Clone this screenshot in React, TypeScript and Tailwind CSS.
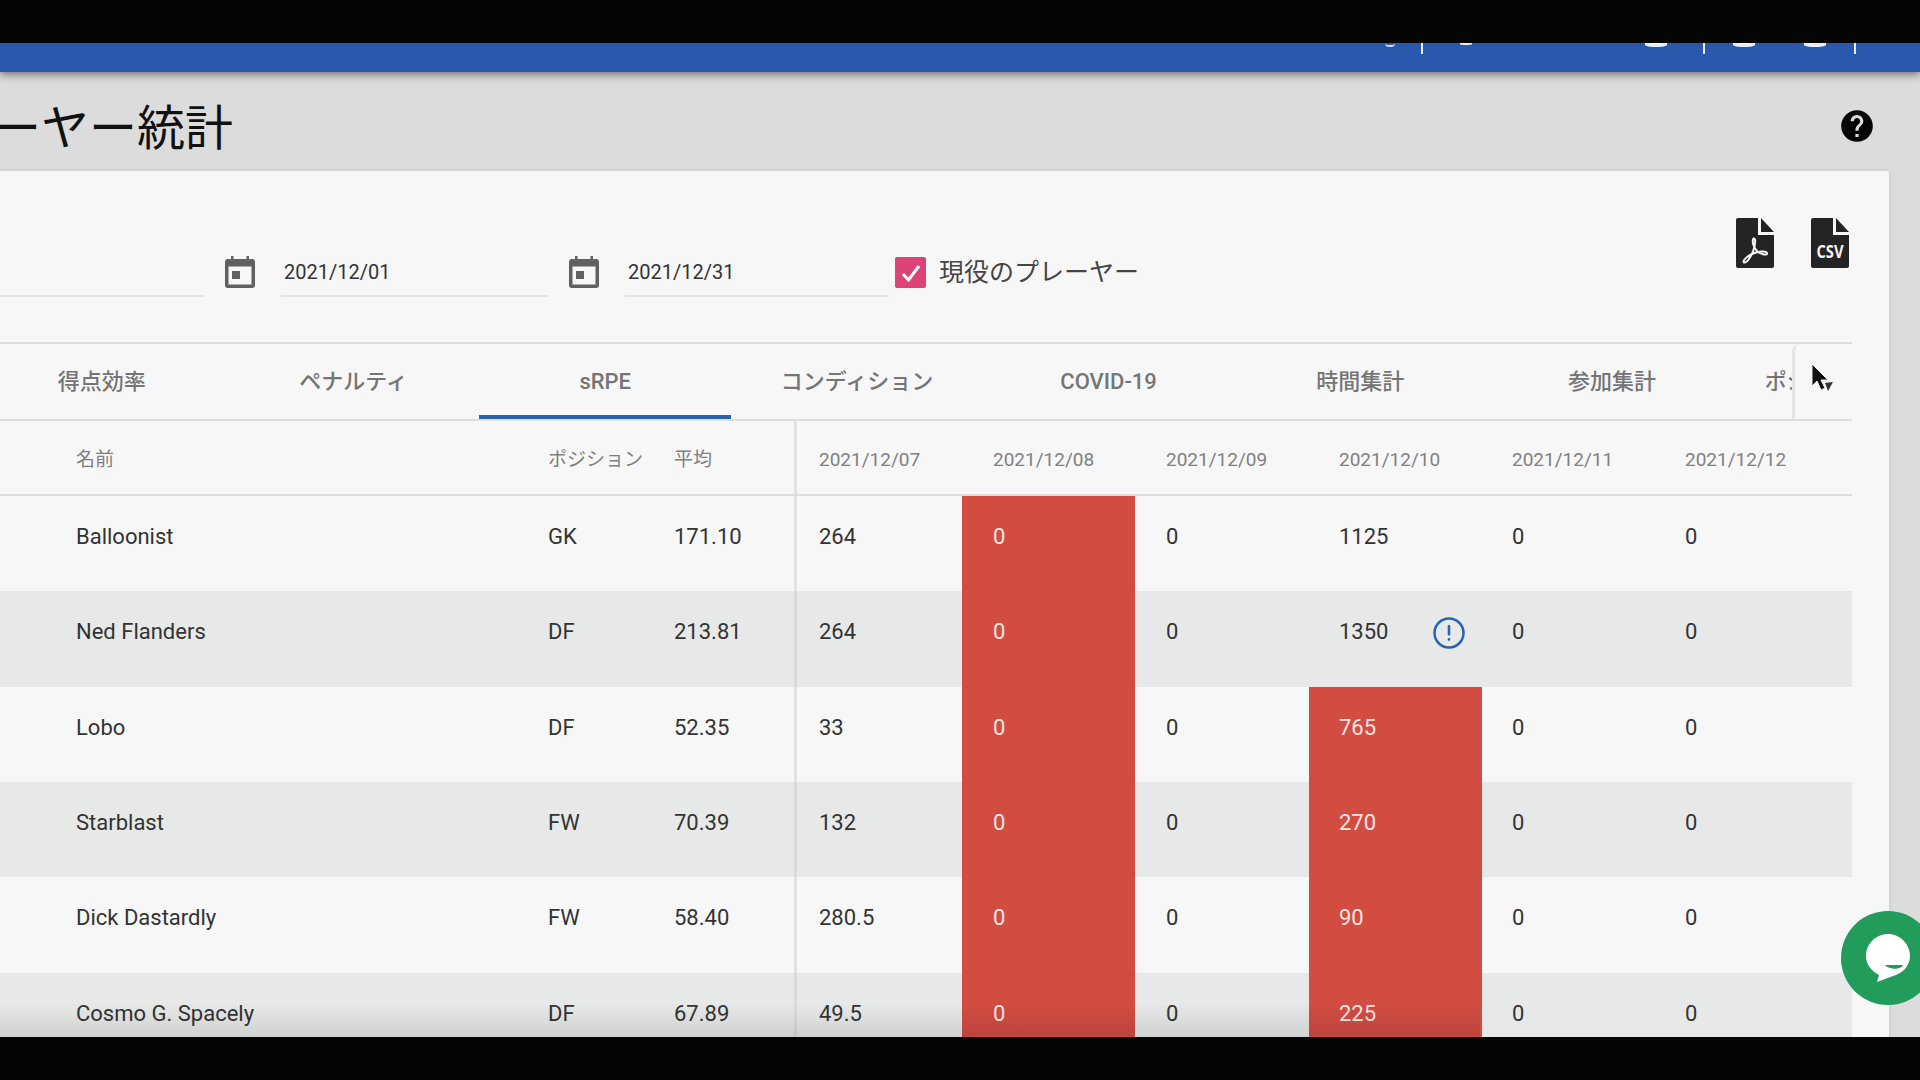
const tabs = ["得点効率", "ペナルティ", "sRPE", "コンディション", "COVID-19", "時間集計", "参加集計"]

const dates = ["2021/12/07", "2021/12/08", "2021/12/09", "2021/12/10", "2021/12/11", "2021/12/12"]

const dateCellPads = ["pl-[22px]", "pl-[31px]", "pl-[31px]", "pl-[30px]", "pl-[30px]", "pl-[30px]"]

const players = [
  { name: "Balloonist", pos: "GK", avg: "171.10", values: ["264", "0", "0", "1125", "0", "0"] },
  { name: "Ned Flanders", pos: "DF", avg: "213.81", values: ["264", "0", "0", "1350", "0", "0"], flag: true },
  { name: "Lobo", pos: "DF", avg: "52.35", values: ["33", "0", "0", "765", "0", "0"], hot: true },
  { name: "Starblast", pos: "FW", avg: "70.39", values: ["132", "0", "0", "270", "0", "0"], hot: true },
  { name: "Dick Dastardly", pos: "FW", avg: "58.40", values: ["280.5", "0", "0", "90", "0", "0"], hot: true },
  { name: "Cosmo G. Spacely", pos: "DF", avg: "67.89", values: ["49.5", "0", "0", "225", "0", "0"], hot: true },
]

const gridCols = "grid grid-cols-[548px_126px_123px_165px_173px_174px_173px_173px_197px]"

function CalendarIcon() {
  return (
    <svg width="30" height="32" viewBox="0 0 30 32" className="shrink-0">
      <path
        fillRule="evenodd"
        fill="#616161"
        d="M6 0h2.5v3h13V0H24v3h3a3 3 0 0 1 3 3v23a3 3 0 0 1-3 3H3a3 3 0 0 1-3-3V6a3 3 0 0 1 3-3h3V0zM3.5 10.5V28.500h23V10.500h-23z"
      />
      <rect x="7" y="15" width="8" height="8" fill="#616161" />
    </svg>
  )
}

function FileBody() {
  return (
    <>
      <path fill="#242424" d="M2 0H22V17H38V48a2 2 0 0 1-2 2H2a2 2 0 0 1-2-2V2a2 2 0 0 1 2-2z" />
      <path fill="#242424" d="M25 0L38 14H25z" />
    </>
  )
}

function PdfIcon() {
  return (
    <svg width="38" height="50" viewBox="0 0 38 50">
      <FileBody />
      <path
        fill="none"
        stroke="#f5f5f5"
        strokeWidth="2"
        d="M17.500 20.500C15.500 24 18 30 21.500 33.500C25.500 37 32 37.500 31 35C30 32.500 21.500 33 15 36.500C9 39.500 6.500 43.500 8 44.500C10.500 45.500 15 39 17.500 32C19.500 26 20 20 17.500 20.500Z"
      />
    </svg>
  )
}

function CsvIcon() {
  return (
    <svg width="38" height="50" viewBox="0 0 38 50">
      <FileBody />
      <text
        x="19"
        y="40"
        textAnchor="middle"
        fontSize="18"
        fontWeight="700"
        fill="#f5f5f5"
        textLength="27"
        lengthAdjust="spacingAndGlyphs"
        fontFamily="'Open Sans', sans-serif"
      >
        CSV
      </text>
    </svg>
  )
}

function HelpIcon() {
  return (
    <svg width="38" height="38" viewBox="0 0 24 24" fill="#050505">
      <path d="M12 2C6.48 2 2 6.48 2 12s4.48 10 10 10 10-4.480 10-10S17.520 2 12 2zm1 17h-2v-2h2v2zm2.070-7.750l-.9.920C13.450 12.900 13 13.500 13 15h-2v-.5c0-1.100.450-2.100 1.170-2.830l1.240-1.260c.370-.360.590-.860.590-1.410 0-1.100-.9-2-2-2s-2 .9-2 2H8c0-2.210 1.790-4 4-4s4 1.790 4 4c0 .880-.360 1.680-.930 2.250z" />
    </svg>
  )
}

function InfoIcon() {
  return (
    <svg width="32" height="32" viewBox="0 0 32 32" className="ml-[45px] mt-[-3px] shrink-0">
      <circle cx="16" cy="16" r="14.500" fill="none" stroke="#2a64b0" strokeWidth="2.500" />
      <rect x="14.700" y="8" width="2.600" height="10.500" rx="1" fill="#2a64b0" />
      <rect x="14.700" y="21" width="2.600" height="2.800" rx="1" fill="#2a64b0" />
    </svg>
  )
}

function Cursor() {
  return (
    <svg width="24" height="34" viewBox="0 0 24 34" className="absolute left-[1811px] top-[19px]">
      <path d="M1 1V23L6 18L10 27L14 25L10 17H17Z" fill="#111" stroke="#eee" strokeWidth="1" />
      <path d="M14 20L22 19L17 28Z" fill="#333" />
    </svg>
  )
}

function ChatButton() {
  return (
    <div className="absolute left-[1841px] top-[868px] w-[94px] h-[94px] rounded-full bg-[#219c5b] flex items-center justify-center">
      <svg width="50" height="52" viewBox="0 0 50 52">
        <path
          fill="#fff"
          d="M25 2C37 2 47 12 47 24C47 35 38 42 30 44L14 50L16 43C8 39 3 32 3 24C3 12 13 2 25 2Z"
        />
        <path fill="#219c5b" d="M22 33H40C38 38 26 38 22 33Z" />
      </svg>
    </div>
  )
}

function DateField({ value, width }: { value: string; width: string }) {
  return (
    <div className="flex items-start">
      <div className="mt-[2px] mr-[26px]">
        <CalendarIcon />
      </div>
      <div className={`${width} h-[43px] border-b-2 border-[#e2e2e2] pl-[3px] text-[20px] leading-[37px] text-[#333]`}>
        {value}
      </div>
    </div>
  )
}

export default function App() {
  return (
    <div className="w-[1920px] h-[1080px] overflow-hidden bg-[#050505] font-['Roboto','Noto_Sans_CJK_JP',sans-serif]">
      <div className="h-[43px]" />

      <div className="relative h-[994px] overflow-hidden bg-[#dcdcdc]">
        {/* top bar, only the bottom of its content is in frame */}
        <div className="relative z-10 h-[29px] bg-[#2a58ac] shadow-[0_2px_9px_rgba(0,0,0,0.55)] flex items-start pl-[1385px]">
          <div className="w-[10px] h-[4px] rounded-b-full border-b-2 border-white/80" />
          <div className="w-[2px] h-[11px] bg-[#e8edf6] ml-[26px]" />
          <div className="w-[12px] h-[2px] rounded-b-[50%] bg-[#e8edf6] ml-[37px]" />
          <div className="w-[22px] h-[4px] rounded-b-[50%] bg-[#e8edf6] ml-[173px]" />
          <div className="w-[2px] h-[11px] bg-[#e8edf6] ml-[36px]" />
          <div className="w-[22px] h-[4px] rounded-b-[50%] bg-[#e8edf6] ml-[28px]" />
          <div className="w-[22px] h-[4px] rounded-b-[50%] bg-[#e8edf6] ml-[49px]" />
          <div className="w-[2px] h-[11px] bg-[#e8edf6] ml-[28px]" />
        </div>

        <div className="h-[99px] flex items-center justify-between pt-[9px] pr-[44px]">
          <h1 className="-ml-[103px] mt-[5px] text-[48px] leading-[60px] font-normal text-[#111] whitespace-nowrap">
            プレーヤー統計
          </h1>
          <HelpIcon />
        </div>

        <div className="relative w-[1889px] h-[900px] bg-[#f7f7f7] rounded-tr-[2px] shadow-[0_0_4px_rgba(0,0,0,0.12)]">
          {/* filters */}
          <div className="h-[171px] flex items-start justify-between pr-[40px]">
            <div className="flex items-start pt-[83px]">
              <div className="w-[204px] h-[43px] border-b-2 border-[#e2e2e2] mr-[21px]" />
              <div className="mr-[22px]">
                <DateField value="2021/12/01" width="w-[266px]" />
              </div>
              <DateField value="2021/12/31" width="w-[264px]" />
              <div className="ml-[6px] mt-[3px] w-[31px] h-[31px] rounded-[2px] bg-[#dd4377] flex items-center justify-center">
                <svg width="24" height="24" viewBox="0 0 24 24" fill="none" stroke="#fff" strokeWidth="3">
                  <path d="M4 13l5.500 6L20 5" />
                </svg>
              </div>
              <span className="ml-[13px] text-[25px] leading-[38px] text-[#444] whitespace-nowrap">現役のプレーヤー</span>
            </div>
            <div className="flex gap-[37px] pt-[47px]">
              <PdfIcon />
              <CsvIcon />
            </div>
          </div>

          {/* tabs */}
          <div className="relative w-[1852px] h-[79px] border-y-2 border-[#dedede]">
            <div className="h-full overflow-hidden flex -ml-[24px] w-[1876px]">
              {tabs.map((tab) => (
                <div
                  key={tab}
                  className={
                    tab === "sRPE"
                      ? "w-[251.700px] shrink-0 h-[75px] flex items-center justify-center border-b-4 border-[#2a64b0] pt-[4px] text-[22px] font-medium text-[#757575]"
                      : "w-[251.700px] shrink-0 h-[75px] flex items-center justify-center text-[22px] font-medium text-[#757575]"
                  }
                >
                  {tab}
                </div>
              ))}
              <div className="w-[200px] shrink-0 h-[75px] flex items-center pl-[27px] text-[22px] font-medium text-[#757575] whitespace-nowrap">
                ポジション
              </div>
            </div>
            <div className="absolute right-0 top-0 w-[60px] h-full bg-[#f7f7f7] rounded-tl-[8px] border-l-[3px] border-[#e4e4e4]" />
            <Cursor />
          </div>

          {/* table head */}
          <div className={`${gridCols} w-[1852px] h-[75px] items-center border-b-2 border-[#dedede] text-[19px] text-[#808080]`}>
            <div className="pl-[76px] pt-[5px]">名前</div>
            <div className="pt-[5px]">ポジション</div>
            <div className="h-full flex items-center pt-[5px] border-r-[3px] border-[#e2e2e2]">平均</div>
            {dates.map((date, i) => (
              <div key={date} className={`${dateCellPads[i]} pt-[5px]`}>
                {date}
              </div>
            ))}
          </div>

          {/* table rows */}
          {players.map((p, r) => (
            <div
              key={p.name}
              className={
                r % 2 === 1
                  ? `${gridCols} w-[1852px] h-[95.330px] bg-[#e7e8e8] text-[22px] leading-[24px] text-[#333]`
                  : `${gridCols} w-[1852px] h-[95.330px] text-[22px] leading-[24px] text-[#333]`
              }
            >
              <div className="pl-[76px] pt-[29px]">{p.name}</div>
              <div className="pt-[29px]">{p.pos}</div>
              <div className={r % 2 === 1 ? "pt-[29px] border-r-[3px] border-[#dadada]" : "pt-[29px] border-r-[3px] border-[#e2e2e2]"}>
                {p.avg}
              </div>
              {p.values.map((v, i) => (
                <div
                  key={i}
                  className={`${dateCellPads[i]} pt-[29px] flex items-start ${
                    i === 1 || (i === 3 && p.hot) ? "bg-[#d24c42] text-[#f8e6e3]" : ""
                  }`}
                >
                  {v}
                  {i === 3 && p.flag && <InfoIcon />}
                </div>
              ))}
            </div>
          ))}
        </div>

        {/* video fade at the bottom edge */}
        <div className="absolute left-0 bottom-0 w-[1480px] h-[34px] bg-gradient-to-b from-transparent to-black/10" />
        <ChatButton />
      </div>

      <div className="h-[43px]" />
    </div>
  )
}
